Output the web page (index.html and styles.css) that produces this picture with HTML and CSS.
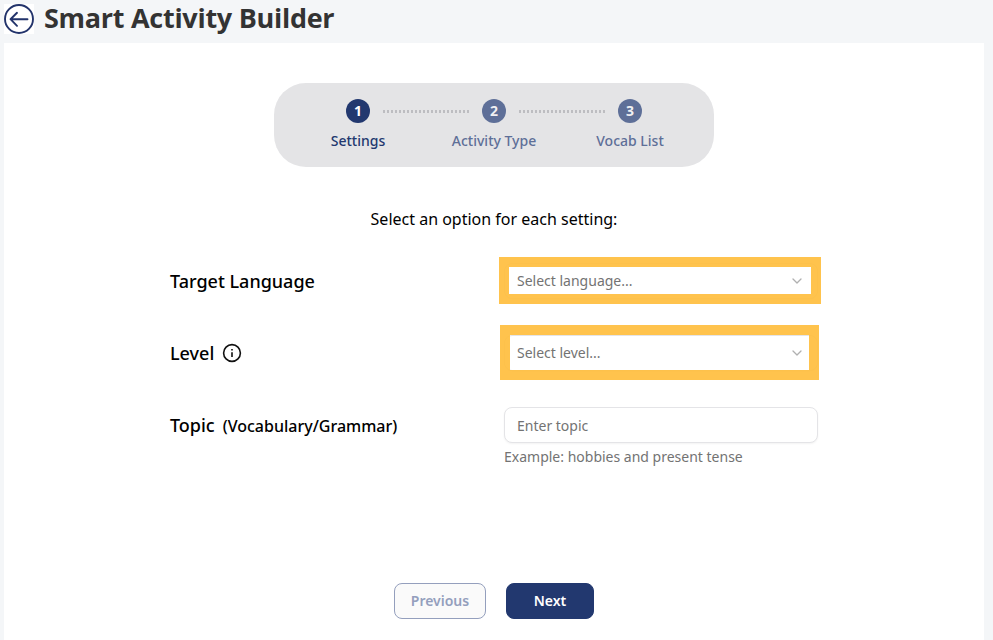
FILE: index.html
```html
<!DOCTYPE html>
<html lang="en">
<head>
    <meta charset="UTF-8">
    <meta name="viewport" content="width=device-width, initial-scale=1.0">
    <title>Smart Activity Builder</title>
    <link rel="stylesheet" href="styles.css">
</head>
<body>
    <header class="page-header">
        <a href="#" class="back-link" aria-label="Back">
            <svg width="30" height="30" viewBox="0 0 30 30" fill="none" stroke="#22336b" stroke-width="1.9" stroke-linecap="round" stroke-linejoin="round">
                <circle cx="15" cy="15" r="14"/>
                <path d="M23.5 15.2H6.8M13 8.8L6.5 15.2L13 21.8"/>
            </svg>
        </a>
        <h1>Smart Activity Builder</h1>
    </header>

    <main class="panel">
        <ol class="stepper">
            <li class="step active">
                <span class="step-number">1</span>
                <span class="step-label">Settings</span>
            </li>
            <li class="step-line"></li>
            <li class="step">
                <span class="step-number">2</span>
                <span class="step-label">Activity Type</span>
            </li>
            <li class="step-line"></li>
            <li class="step">
                <span class="step-number">3</span>
                <span class="step-label">Vocab List</span>
            </li>
        </ol>

        <p class="intro">Select an option for each setting:</p>

        <form class="settings-form">
            <div class="form-row">
                <div class="form-label">Target Language</div>
                <div class="form-field">
                    <div class="select-box">
                        <span>Select language...</span>
                        <svg width="16" height="16" viewBox="0 0 16 16" fill="none" stroke="#b0b0b0" stroke-width="1.3" stroke-linecap="round" stroke-linejoin="round">
                            <path d="M4 6L8 10L12 6"/>
                        </svg>
                    </div>
                    <div class="highlight highlight-language"></div>
                </div>
            </div>

            <div class="form-row">
                <div class="form-label">
                    Level
                    <svg class="info-icon" width="20" height="20" viewBox="0 0 20 20" fill="none" stroke="#111" stroke-width="1.6">
                        <circle cx="10" cy="10" r="8.4"/>
                        <path d="M10 9.2V14M10 6V7.6"/>
                    </svg>
                </div>
                <div class="form-field">
                    <div class="select-box">
                        <span>Select level...</span>
                        <svg width="16" height="16" viewBox="0 0 16 16" fill="none" stroke="#b0b0b0" stroke-width="1.3" stroke-linecap="round" stroke-linejoin="round">
                            <path d="M4 6L8 10L12 6"/>
                        </svg>
                    </div>
                    <div class="highlight highlight-level"></div>
                </div>
            </div>

            <div class="form-row">
                <label class="form-label" for="topic">Topic <small>(Vocabulary/Grammar)</small></label>
                <div class="form-field">
                    <input type="text" id="topic" name="topic" placeholder="Enter topic">
                    <p class="hint">Example: hobbies and present tense</p>
                </div>
            </div>
        </form>

        <div class="actions">
            <button type="button" class="btn btn-previous" disabled>Previous</button>
            <button type="button" class="btn btn-next">Next</button>
        </div>
    </main>
</body>
</html>
```
FILE: styles.css
```css
* {
    box-sizing: border-box;
}
body {
    margin: 0;
    height: 640px;
    overflow: hidden;
    display: flex;
    flex-direction: column;
    background: #f4f6f8;
    color: #000;
    font-family: "Noto Sans", sans-serif;
}
.page-header {
    display: flex;
    align-items: center;
    gap: 10px;
    height: 43px;
    padding: 0 4px 5px;
}
.back-link {
    display: flex;
    background: white;
}
h1 {
    margin: 0;
    padding-bottom: 2px;
    color: #333;
    font-family: "Open Sans", sans-serif;
    font-size: 27px;
    font-weight: 700;
    line-height: 36px;
    letter-spacing: -0.28px;
    white-space: nowrap;
}
.panel {
    flex: 1;
    margin: 0 9px 0 4px;
    padding-top: 40px;
    background: white;
}
.stepper {
    display: flex;
    justify-content: center;
    width: 440px;
    height: 84px;
    margin: 0 auto;
    padding: 16px 0 0;
    border-radius: 32px;
    background: #e4e4e6;
    list-style: none;
}
.step {
    display: flex;
    flex-direction: column;
    align-items: center;
    gap: 8px;
    width: 24px;
    color: #5e6f98;
}
.step-number {
    width: 24px;
    height: 24px;
    border-radius: 50%;
    background: #5e6f98;
    color: #f0f0f2;
    font-size: 14px;
    font-weight: 700;
    line-height: 24px;
    text-align: center;
}
.step-label {
    font-size: 14px;
    font-weight: 500;
    line-height: 20px;
    white-space: nowrap;
}
.step.active {
    color: #22386f;
}
.step.active .step-number {
    background: #22386f;
    color: white;
}
.step-line {
    width: 86px;
    height: 3px;
    margin: 11px 13px 0;
    background: repeating-linear-gradient(to right, #bdbdc1 0 2px, transparent 2px 4px);
}
.intro {
    margin: 40px 0 0;
    font-size: 16px;
    line-height: 24px;
    text-align: center;
}
.settings-form {
    display: flex;
    flex-direction: column;
    gap: 36px;
    width: 648px;
    margin: 32px auto 0;
}
.form-row {
    display: grid;
    grid-template-columns: 334px 314px;
    align-items: start;
}
.form-label {
    display: flex;
    align-items: center;
    gap: 8px;
    height: 36px;
    font-size: 18px;
    font-weight: 500;
}
.form-label small {
    padding-top: 2px;
    font-size: 16px;
}
.form-field {
    position: relative;
}
.select-box, input {
    display: flex;
    align-items: center;
    justify-content: space-between;
    width: 100%;
    height: 36px;
    padding: 0 12px;
    border: 1px solid #e4e4e7;
    border-radius: 8px;
    background: white;
    box-shadow: 0 1px 2px rgba(0,0,0,0.05);
    color: #737373;
    font-family: inherit;
    font-size: 14px;
}
.select-box span {
    padding-bottom: 1px;
    line-height: 19px;
}
input::placeholder {
    color: #737373;
}
.hint {
    margin: 4px 0 0;
    color: #737373;
    font-size: 14px;
    line-height: 20px;
}
/* marker frames drawn over the required selects */
.highlight {
    position: absolute;
    border: 10px solid rgba(255, 188, 58, 0.9);
    pointer-events: none;
}
.highlight-language {
    top: -6px;
    right: -3px;
    bottom: -5px;
    left: -5px;
}
.highlight-level {
    top: -10px;
    right: -1px;
    bottom: -9px;
    left: -4px;
}
.actions {
    display: flex;
    justify-content: center;
    gap: 20px;
    margin-top: 116px;
}
.btn {
    height: 36px;
    padding: 0 0 2px;
    border: 1px solid #22386f;
    border-radius: 8px;
    font-family: inherit;
    font-size: 14px;
    font-weight: 600;
}
.btn-previous {
    width: 92px;
    border-color: #949fbd;
    background: #fafafa;
    color: #949fbd;
}
.btn-next {
    width: 88px;
    background: #22386f;
    color: white;
}
```
